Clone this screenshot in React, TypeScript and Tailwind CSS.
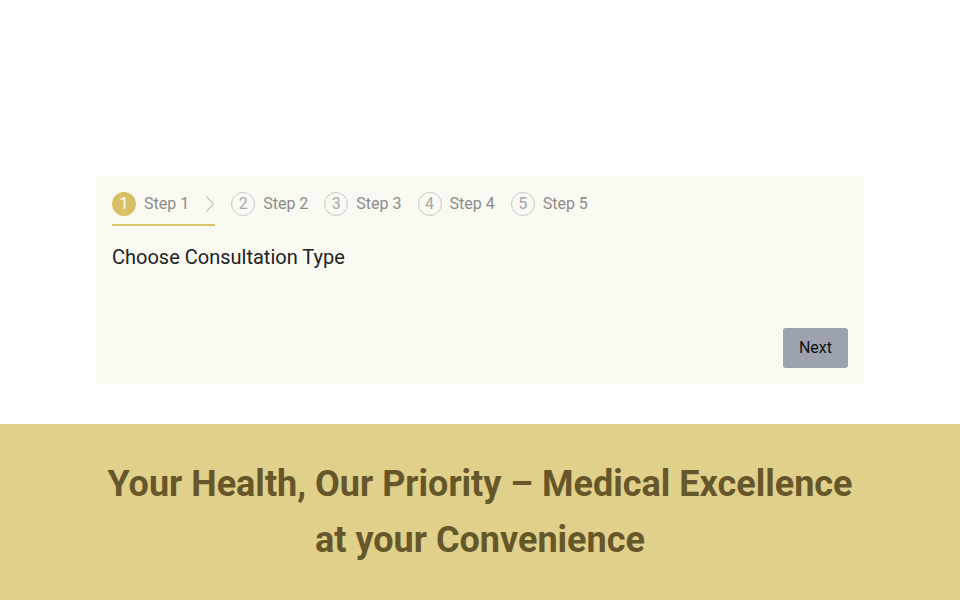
const steps = [1, 2, 3, 4, 5];

export default function App() {
    return (
        <div className="w-[960px] h-[600px] bg-white flex flex-col font-['Roboto',sans-serif]">
            <div className="h-[176px]" />

            <div className="mx-[96px] h-[208px] bg-[#faf9f2] p-4 flex flex-col">
                <div className="flex items-start h-[34px]">
                    {steps.map((n) => {
                        const active = n === 1;
                        return (
                            <div
                                key={n}
                                className={`flex items-start h-full mr-4 ${active ? 'border-b-2 border-[#dcc46a]' : ''}`}
                            >
                                <span
                                    className={`w-6 h-6 rounded-full flex items-center justify-center text-[16px] ${active ? 'bg-[#d9c066] text-white' : 'border border-[#c9c9c9] text-[#a8a8a8]'}`}
                                >
                                    {n}
                                </span>
                                <span className="ml-2 text-[16px] leading-6 text-[#8c8c8c]">Step {n}</span>
                                {active && (
                                    <svg width="10" height="18" viewBox="0 0 10 18" className="ml-4 mt-[3px]">
                                        <path d="M1.5 1.5 L8.5 9 L1.5 16.5" fill="none" stroke="#c4c4c4" strokeWidth="1.1" />
                                    </svg>
                                )}
                            </div>
                        );
                    })}
                </div>

                <h2 className="mt-[19px] text-[20px] text-[#222] leading-[24px]">Choose Consultation Type</h2>

                <div className="flex-1" />
                <div className="flex justify-end">
                    <button className="h-10 w-[65px] rounded-[3px] bg-[#9ca3af] text-[16px] text-[#111]">Next</button>
                </div>
            </div>

            <div className="h-[40px]" />

            <div className="flex-1 bg-[#e0d08a] flex items-start justify-center pt-[32px]">
                <h1 className="text-center text-[36px] font-bold leading-[56px] text-[#66572a] w-[780px]">
                    Your Health, Our Priority – Medical Excellence at your Convenience
                </h1>
            </div>
        </div>
    );
}
